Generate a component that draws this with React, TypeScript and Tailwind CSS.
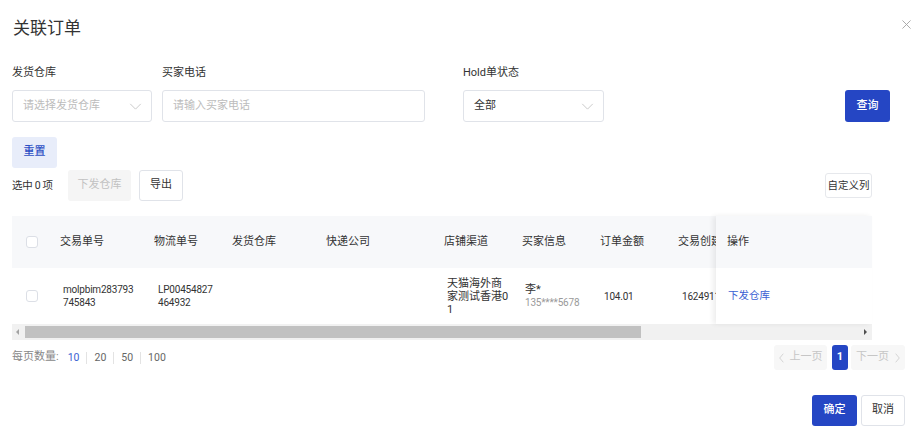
import React from 'react'

const BLUE = 'bg-[#2546c4]'

const COLS: { title: string; w: string }[] = [
  { title: '交易单号', w: 'w-[94px]' },
  { title: '物流单号', w: 'w-[78px]' },
  { title: '发货仓库', w: 'w-[94px]' },
  { title: '快递公司', w: 'w-[118px]' },
  { title: '店铺渠道', w: 'w-[78px]' },
  { title: '买家信息', w: 'w-[78px]' },
  { title: '订单金额', w: 'w-[78px]' },
  { title: '交易创建时间', w: 'w-[130px]' },
]

function Chevron({ dir = 'down', className = '' }: { dir?: 'down' | 'left' | 'right'; className?: string }) {
  const d = dir === 'down' ? 'M1 1l6 6 6-6' : dir === 'left' ? 'M6 1L1 7l5 6' : 'M1 1l5 6-5 6'
  const vb = dir === 'down' ? '0 0 14 8' : '0 0 7 14'
  return (
    <svg viewBox={vb} className={className} fill="none" stroke="currentColor" strokeWidth="1">
      <path d={d} />
    </svg>
  )
}

function Checkbox() {
  return <span className="block h-[12px] w-[12px] rounded-[3px] border border-[#dcdfe6] bg-white" />
}

function Field({ label, children, className = '' }: { label: string; children: React.ReactNode; className?: string }) {
  return (
    <div className={`flex flex-col ${className}`}>
      <div className="mb-[9px] h-[16px] text-[11px] leading-[16px] text-[#333]">{label}</div>
      {children}
    </div>
  )
}

export default function App() {
  return (
    <div className="relative h-[429px] w-[920px] overflow-hidden bg-white font-['Roboto','Noto_Sans_CJK_SC',sans-serif] text-[#333]">
      {/* header */}
      <div className="flex h-[56px] items-start justify-between pl-[13px] pr-[9px]">
        <h1 className="mt-[16px] text-[17px] leading-[24px] text-[#333]">关联订单</h1>
        <svg viewBox="0 0 10 10" className="mt-[20px] h-[9px] w-[9px] text-[#a3a3a3]" stroke="currentColor" strokeWidth="1">
          <path d="M0.5 0.5l9 9M9.5 0.5l-9 9" />
        </svg>
      </div>

      {/* filters */}
      <div className="flex items-end pl-[12px] pr-[30px] pt-[9px]">
        <Field label="发货仓库" className="w-[140px]">
          <div className="flex h-[32px] items-center justify-between rounded-[3px] border border-[#e0e3e9] pl-[10px] pr-[9px] text-[11px] text-[#bcbcbc]">
            <span>请选择发货仓库</span>
            <Chevron className="h-[7px] w-[13px] text-[#c4c4c4]" />
          </div>
        </Field>
        <Field label="买家电话" className="ml-[10px] w-[263px]">
          <div className="flex h-[32px] items-center rounded-[3px] border border-[#e0e3e9] pl-[10px] text-[11px] text-[#bcbcbc]">
            请输入买家电话
          </div>
        </Field>
        <Field label="Hold单状态" className="ml-[38px] w-[141px]">
          <div className="flex h-[32px] items-center justify-between rounded-[3px] border border-[#e0e3e9] pl-[10px] pr-[9px] text-[11px] text-[#333]">
            <span>全部</span>
            <Chevron className="h-[7px] w-[13px] text-[#c4c4c4]" />
          </div>
        </Field>
        <button className={`ml-auto h-[32px] w-[45px] rounded-[3px] ${BLUE} text-[11px] font-medium text-white`}>查询</button>
      </div>

      <div className="pl-[12px] pt-[15px]">
        <button className="h-[31px] w-[45px] rounded-[3px] bg-[#e8edfa] text-[11px] font-medium text-[#2d4fc4]">重置</button>
      </div>

      {/* toolbar */}
      <div className="mt-[2px] flex h-[31px] items-center pl-[12px] pr-[48px]">
        <span className="w-[56px] text-[10.5px] tracking-[-0.3px] text-[#333]">选中 0 项</span>
        <button className="h-[31px] w-[63px] rounded-[3px] bg-[#f5f5f5] text-[11px] text-[#c2c2c2]">下发仓库</button>
        <button className="ml-[8px] h-[31px] w-[44px] rounded-[3px] border border-[#e0e3e9] bg-white text-[11px] text-[#333]">导出</button>
        <button className="ml-auto h-[25px] w-[47px] rounded-[3px] border border-[#e6e8ec] bg-white text-[10.5px] text-[#333]">自定义列</button>
      </div>

      {/* table */}
      <div className="ml-[12px] mt-[15px] w-[860px]">
        <div className="flex">
          <div className="w-[704px] overflow-hidden">
            <div className="flex h-[52px] w-max items-center bg-[#f7f8fa] text-[11px]">
              <div className="flex w-[38px] justify-center pl-[1px]">
                <Checkbox />
              </div>
              {COLS.map((c) => (
                <div key={c.title} className={`${c.w} whitespace-nowrap pl-[10px]`}>
                  {c.title}
                </div>
              ))}
            </div>
            <div className="flex h-[56px] w-max items-center text-[10px] leading-[13px] tracking-[-0.2px]">
              <div className="flex w-[38px] justify-center pl-[1px]">
                <Checkbox />
              </div>
              <div className="w-[94px] pl-[13px]">
                <div className="w-[71px] break-all">molpbim283793745843</div>
              </div>
              <div className="w-[78px] pl-[14px]">
                <div className="w-[56px] break-all">LP00454827464932</div>
              </div>
              <div className="w-[94px]" />
              <div className="w-[118px]" />
              <div className="w-[78px] pl-[13px] text-[11px] tracking-normal">
                <div className="w-[63px] break-all">天猫海外商家测试香港01</div>
              </div>
              <div className="w-[78px] pl-[13px]">
                <div className="text-[11px] tracking-normal">李*</div>
                <div className="text-[#9a9a9a]">135****5678</div>
              </div>
              <div className="w-[78px] pl-[14px]">104.01</div>
              <div className="w-[130px] pl-[14px]">1624911563000</div>
            </div>
          </div>
          <div className="relative z-10 w-[156px] shadow-[-3px_0_5px_rgba(0,0,0,0.07)]">
            <div className="flex h-[52px] items-center bg-[#f7f8fa] pl-[11px] text-[11px]">操作</div>
            <div className="flex h-[56px] items-center bg-white pl-[12px] text-[10.5px] text-[#3a5fd3]">下发仓库</div>
          </div>
        </div>
        {/* scrollbar */}
        <div className="flex h-[16px] items-center bg-[#f1f1f1]">
          <span className="ml-[4px] h-0 w-0 border-y-[3px] border-r-[3px] border-y-transparent border-r-[#a3a3a3]" />
          <span className="ml-[6px] h-[12px] w-[616px] bg-[#c1c1c1]" />
          <span className="ml-auto mr-[5px] h-0 w-0 border-y-[3px] border-l-[3px] border-y-transparent border-l-[#505050]" />
        </div>
      </div>

      {/* pagination */}
      <div className="mt-[5px] flex h-[25px] items-center pl-[12px] pr-[15px] text-[11px]">
        <span className="text-[#888]">每页数量:</span>
        <div className="ml-[9px] flex items-center text-[10.5px] text-[#666]">
          <span className="text-[#3a5fd3]">10</span>
          <span className="mx-[7px] h-[12px] w-px bg-[#e3e3e3]" />
          <span>20</span>
          <span className="mx-[7px] h-[12px] w-px bg-[#e3e3e3]" />
          <span>50</span>
          <span className="mx-[7px] h-[12px] w-px bg-[#e3e3e3]" />
          <span>100</span>
        </div>
        <div className="ml-auto flex items-center">
          <div className="flex h-[25px] w-[53px] items-center justify-center gap-[6px] rounded-[3px] bg-[#f7f7f7] text-[#c6c6c6]">
            <Chevron dir="left" className="h-[10px] w-[5px]" />
            <span>上一页</span>
          </div>
          <div className={`ml-[5px] flex h-[25px] w-[16px] items-center justify-center rounded-[3px] ${BLUE} font-bold text-white`}>1</div>
          <div className="ml-[3px] flex h-[25px] w-[54px] items-center justify-center gap-[6px] rounded-[3px] bg-[#f7f7f7] text-[#c6c6c6]">
            <span>下一页</span>
            <Chevron dir="right" className="h-[10px] w-[5px]" />
          </div>
        </div>
      </div>

      {/* footer */}
      <div className="mt-[25px] flex justify-end gap-[4px] pr-[15px]">
        <button className={`h-[31px] w-[45px] rounded-[3px] ${BLUE} text-[11px] font-medium text-white`}>确定</button>
        <button className="h-[31px] w-[44px] rounded-[3px] border border-[#e0e3e9] bg-white text-[11px] text-[#333]">取消</button>
      </div>
    </div>
  )
}
